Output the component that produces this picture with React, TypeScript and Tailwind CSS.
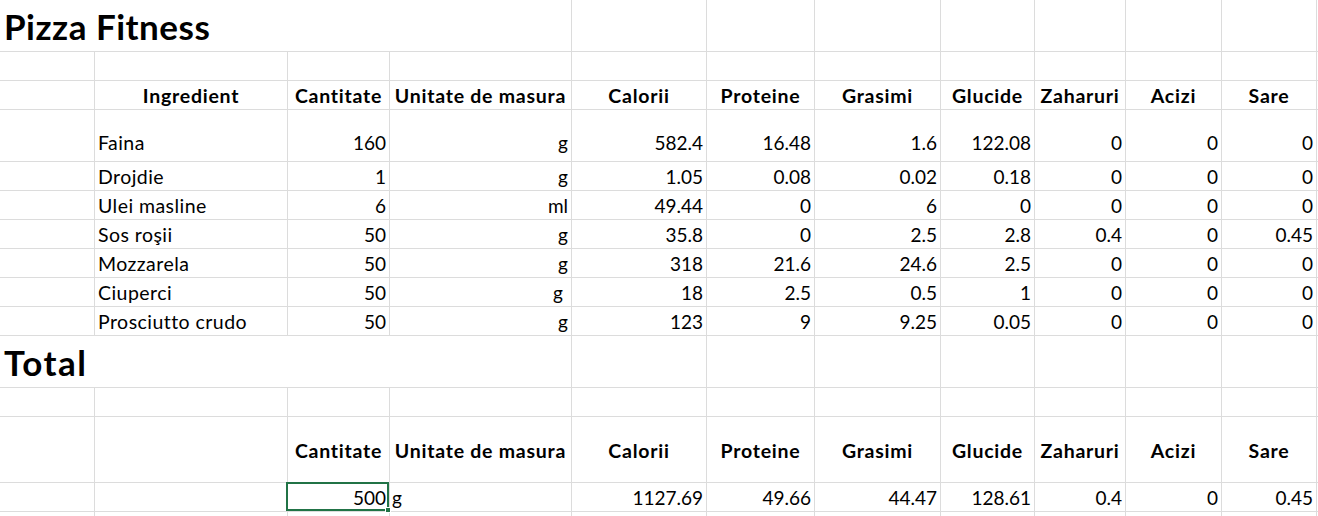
import React from "react";

type Align = "l" | "r" | "c";
type V = "c" | "b";

const alignCls: Record<Align, string> = {
  l: "justify-start",
  r: "justify-end",
  c: "justify-center",
};
const vCls: Record<V, string> = {
  c: "items-center pt-[2px]",
  b: "items-end pb-[6px]",
};

function Cell({
  children,
  a = "r",
  v = "c",
  bold = false,
  extra = "",
}: {
  children?: React.ReactNode;
  a?: Align;
  v?: V;
  bold?: boolean;
  extra?: string;
}) {
  return (
    <div
      className={`flex ${alignCls[a]} ${vCls[v]} px-[3px] border-r border-b border-[#dcdcdc] whitespace-nowrap min-w-0 ${
        bold ? "font-bold text-[19.5px] tracking-[0.75px]" : ""
      } ${extra}`}
    >
      {children}
    </div>
  );
}

const headers = [
  "Calorii",
  "Proteine",
  "Grasimi",
  "Glucide",
  "Zaharuri",
  "Acizi",
  "Sare",
];

const rows: [string, string, string, string[]][] = [
  ["Faina", "160", "g", ["582.4", "16.48", "1.6", "122.08", "0", "0", "0"]],
  ["Drojdie", "1", "g", ["1.05", "0.08", "0.02", "0.18", "0", "0", "0"]],
  ["Ulei masline", "6", "ml", ["49.44", "0", "6", "0", "0", "0", "0"]],
  ["Sos roşii", "50", "g", ["35.8", "0", "2.5", "2.8", "0.4", "0", "0.45"]],
  ["Mozzarela", "50", "g", ["318", "21.6", "24.6", "2.5", "0", "0", "0"]],
  ["Ciuperci", "50", "g ", ["18", "2.5", "0.5", "1", "0", "0", "0"]],
  ["Prosciutto crudo", "50", "g", ["123", "9", "9.25", "0.05", "0", "0", "0"]],
];

function EmptyRow({ n = 12 }: { n?: number }) {
  return (
    <>
      {Array.from({ length: n }).map((_, i) => (
        <Cell key={i} />
      ))}
    </>
  );
}

export default function App() {
  return (
    <div
      className="w-[1318px] h-[516px] overflow-hidden bg-white text-black text-[19px] leading-[24px]"
      style={{ fontFamily: "Lato, 'Noto Sans', sans-serif" }}
    >
      <div className="grid grid-cols-[95px_193px_102px_182px_135px_108px_126px_94px_91px_96px_95px_1fr] grid-rows-[52px_29px_29px_52px_29px_29px_29px_29px_29px_29px_52px_29px_66px_29px_29px]">
        {/* Row 1: title */}
        <div className="col-span-4 flex items-center px-[4px] border-r border-b border-[#dcdcdc] text-[35px] leading-[42px] font-bold tracking-[0.5px] whitespace-nowrap">
          Pizza Fitness
        </div>
        <EmptyRow n={8} />

        {/* Row 2 */}
        <EmptyRow />

        {/* Row 3: headers */}
        <Cell />
        <Cell a="c" bold>Ingredient</Cell>
        <Cell a="c" bold>Cantitate</Cell>
        <Cell a="c" bold>Unitate de masura</Cell>
        {headers.map((h) => (
          <Cell key={h} a="c" bold>
            {h}
          </Cell>
        ))}
        <Cell />

        {/* Data rows */}
        {rows.map(([name, qty, unit, vals], ri) => {
          const v: V = ri === 0 ? "b" : "c";
          return (
            <React.Fragment key={name}>
              <Cell v={v} />
              <Cell a="l" v={v} extra="text-[19.5px] tracking-[0.45px]">
                {name}
              </Cell>
              <Cell v={v}>{qty}</Cell>
              <Cell v={v} extra={unit === "g " ? "pr-[8px]" : ""}>
                {unit.trim()}
              </Cell>
              {vals.map((x, i) => (
                <Cell key={i} v={v}>
                  {x}
                </Cell>
              ))}
              <Cell v={v} />
            </React.Fragment>
          );
        })}

        {/* Total title */}
        <div className="col-span-4 flex items-center px-[4px] border-r border-b border-[#dcdcdc] text-[35px] leading-[42px] font-bold tracking-[1.5px] whitespace-nowrap">
          Total
        </div>
        <EmptyRow n={8} />

        {/* Empty row */}
        <EmptyRow />

        {/* Total headers */}
        <Cell />
        <Cell />
        <Cell a="c" bold>Cantitate</Cell>
        <Cell a="c" bold>Unitate de masura</Cell>
        {headers.map((h) => (
          <Cell key={h} a="c" bold>
            {h}
          </Cell>
        ))}
        <Cell />

        {/* Total values */}
        <Cell />
        <Cell />
        <div className="relative flex justify-end items-center pt-[2px] px-[3px] border-r border-b border-[#dcdcdc] whitespace-nowrap">
          500
          <div className="absolute -left-[2px] -top-[1px] right-0 bottom-0 border-2 border-[#217346] pointer-events-none" />
          <div className="absolute -right-[2px] -bottom-[2px] w-[6px] h-[6px] bg-[#217346] border border-white pointer-events-none" />
        </div>
        <Cell a="l" extra="pl-[2px]">g</Cell>
        {["1127.69", "49.66", "44.47", "128.61", "0.4", "0", "0.45"].map(
          (x, i) => (
            <Cell key={i}>{x}</Cell>
          )
        )}
        <Cell />

        {/* Partial last row */}
        <EmptyRow />
      </div>
    </div>
  );
}
